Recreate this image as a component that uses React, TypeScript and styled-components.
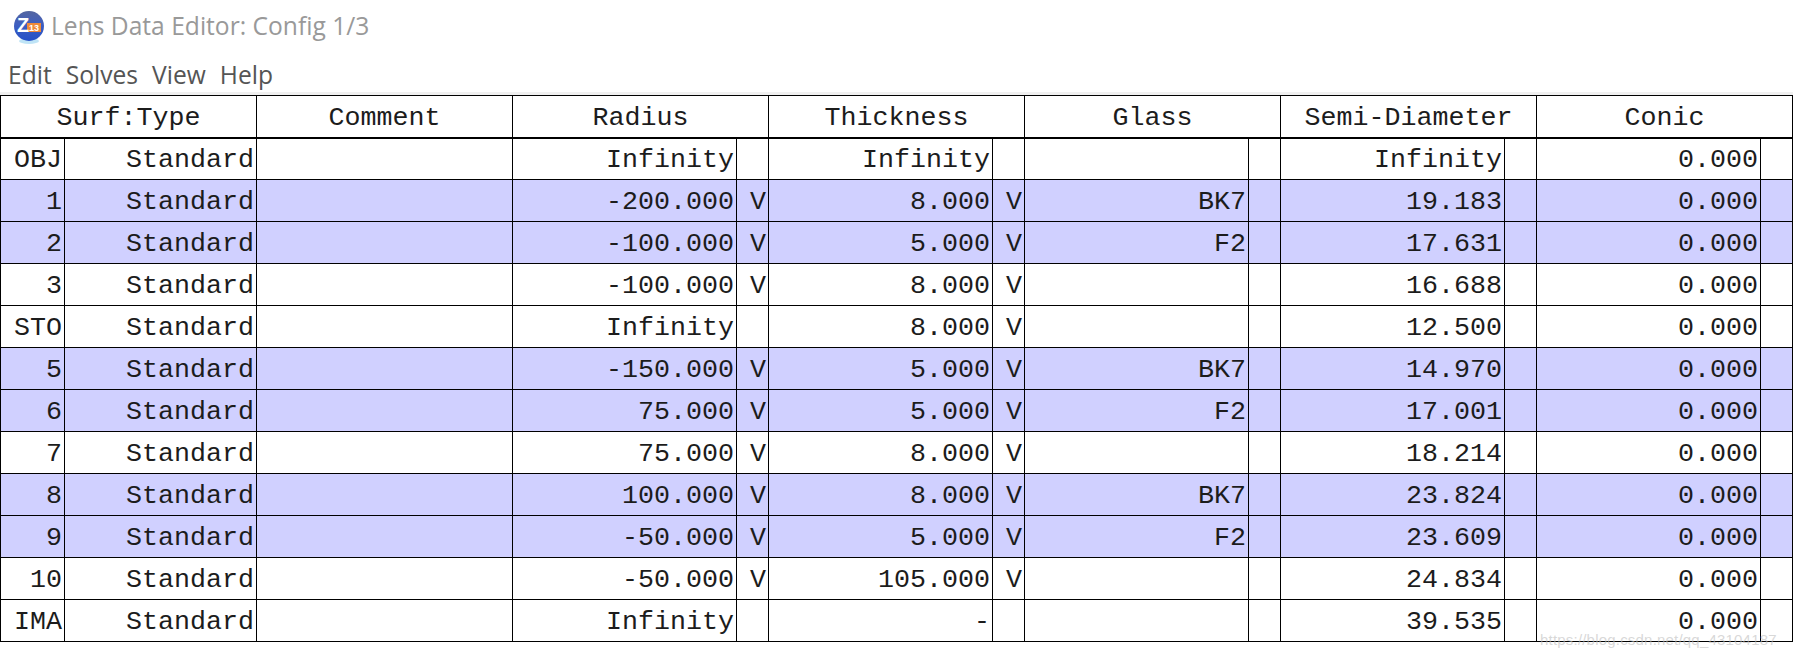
import React from 'react';
import styled, { createGlobalStyle } from 'styled-components';

const GlobalStyle = createGlobalStyle`
  html, body {
    margin: 0;
    padding: 0;
    background: #ffffff;
  }
`;

interface Surface {
  id: string;
  radius: string;
  radiusSolve?: boolean;
  thickness: string;
  thicknessSolve?: boolean;
  glass?: string;
  semi: string;
  shaded?: boolean;
}

const headers = ['Comment', 'Radius', 'Thickness', 'Glass', 'Semi-Diameter', 'Conic'];

const surfaces: Surface[] = [
  { id: 'OBJ', radius: 'Infinity', thickness: 'Infinity', semi: 'Infinity' },
  { id: '1', radius: '-200.000', radiusSolve: true, thickness: '8.000', thicknessSolve: true, glass: 'BK7', semi: '19.183', shaded: true },
  { id: '2', radius: '-100.000', radiusSolve: true, thickness: '5.000', thicknessSolve: true, glass: 'F2', semi: '17.631', shaded: true },
  { id: '3', radius: '-100.000', radiusSolve: true, thickness: '8.000', thicknessSolve: true, semi: '16.688' },
  { id: 'STO', radius: 'Infinity', thickness: '8.000', thicknessSolve: true, semi: '12.500' },
  { id: '5', radius: '-150.000', radiusSolve: true, thickness: '5.000', thicknessSolve: true, glass: 'BK7', semi: '14.970', shaded: true },
  { id: '6', radius: '75.000', radiusSolve: true, thickness: '5.000', thicknessSolve: true, glass: 'F2', semi: '17.001', shaded: true },
  { id: '7', radius: '75.000', radiusSolve: true, thickness: '8.000', thicknessSolve: true, semi: '18.214' },
  { id: '8', radius: '100.000', radiusSolve: true, thickness: '8.000', thicknessSolve: true, glass: 'BK7', semi: '23.824', shaded: true },
  { id: '9', radius: '-50.000', radiusSolve: true, thickness: '5.000', thicknessSolve: true, glass: 'F2', semi: '23.609', shaded: true },
  { id: '10', radius: '-50.000', radiusSolve: true, thickness: '105.000', thicknessSolve: true, semi: '24.834' },
  { id: 'IMA', radius: 'Infinity', thickness: '-', semi: '39.535' },
];

const Page = styled.div`
  position: relative;
  width: 1793px;
  height: 657px;
  overflow: hidden;
  background: #ffffff;
`;

const TitleBar = styled.div`
  display: flex;
  align-items: center;
  gap: 6px;
  height: 48px;
  padding: 3px 0 0 14px;
  box-sizing: border-box;
`;

const LogoMark = styled.svg`
  flex: none;
  margin-top: 4px;
`;

const Title = styled.span`
  font-family: 'Open Sans', 'Noto Sans', sans-serif;
  font-size: 24.6px;
  color: #999999;
`;

const MenuBar = styled.div`
  display: flex;
  gap: 14px;
  height: 47px;
  padding: 11px 0 0 8px;
  box-sizing: border-box;
  border-bottom: 3px solid #f0f0f0;
`;

const MenuItem = styled.span`
  font-family: 'Open Sans', 'Noto Sans', sans-serif;
  font-size: 24.6px;
  line-height: 32px;
  color: #555555;
`;

const Table = styled.div`
  width: 1793px;
  font-family: 'Liberation Mono', 'Courier New', monospace;
  font-size: 26.67px;
  color: #1c1c1c;
`;

const HeaderRow = styled.div`
  display: grid;
  grid-template-columns: repeat(7, 256px) 1px;
  height: 44px;
  box-sizing: border-box;
  border-top: 1px solid #000000;
  border-bottom: 2px solid #000000;
`;

const HeaderCell = styled.div`
  display: flex;
  align-items: center;
  justify-content: center;
  box-sizing: border-box;
  border-left: 1px solid #000000;
  padding-top: 2px;
`;

const Row = styled.div<{ $shaded?: boolean }>`
  display: grid;
  grid-template-columns: repeat(7, 256px) 1px;
  height: 42px;
  box-sizing: border-box;
  border-bottom: 1px solid #000000;
  background: ${(p) => (p.$shaded ? '#d0d0ff' : '#ffffff')};

  ${HeaderRow} + & {
    height: 41px;
  }
`;

const Split = styled.div<{ $side: number }>`
  display: grid;
  grid-template-columns: ${(p) => (p.$side === 64 ? '64px 192px' : '224px 32px')};
  box-sizing: border-box;
  min-width: 0;
`;

const Cell = styled.div`
  display: flex;
  align-items: center;
  justify-content: flex-end;
  box-sizing: border-box;
  border-left: 1px solid #000000;
  padding: 2px 2px 0 0;
  white-space: pre;
  line-height: 38px;
`;

const Watermark = styled.div`
  position: absolute;
  left: 1540px;
  top: 632px;
  font-family: 'Liberation Sans', Arial, sans-serif;
  font-size: 15px;
  line-height: 15px;
  letter-spacing: 0.2px;
  color: rgba(190, 190, 190, 0.6);
  white-space: nowrap;
`;

const ZemaxLogo = () => (
  <LogoMark width="31" height="35" viewBox="0 0 31 35" aria-hidden="true">
    <defs>
      <linearGradient id="ball" x1="0" y1="0" x2="0" y2="1">
        <stop offset="0%" stopColor="#54659f" />
        <stop offset="45%" stopColor="#3f5fc0" />
        <stop offset="100%" stopColor="#2450c8" />
      </linearGradient>
    </defs>
    <ellipse cx="15" cy="31" rx="10" ry="3" fill="#bfe4f6" />
    <circle cx="15" cy="16" r="15" fill="url(#ball)" />
    <rect x="13" y="13" width="14" height="9" fill="#ef8a3a" />
    <text x="3" y="22" fontFamily="'Liberation Sans', sans-serif" fontWeight="700" fontSize="20" fill="#ffffff">Z</text>
    <text x="15" y="21" fontFamily="'Liberation Sans', sans-serif" fontWeight="700" fontSize="9" fill="#ffffff">13</text>
  </LogoMark>
);

const SolveCell = ({ value, solve }: { value: string; solve?: boolean }) => (
  <Split $side={32}>
    <Cell>{value}</Cell>
    <Cell>{solve ? 'V' : ''}</Cell>
  </Split>
);

export default function App() {
  return (
    <Page>
      <GlobalStyle />
      <TitleBar>
        <ZemaxLogo />
        <Title>Lens Data Editor: Config 1/3</Title>
      </TitleBar>
      <MenuBar>
        {['Edit', 'Solves', 'View', 'Help'].map((m) => (
          <MenuItem key={m}>{m}</MenuItem>
        ))}
      </MenuBar>
      <Table>
        <HeaderRow>
          <HeaderCell>Surf:Type</HeaderCell>
          {headers.map((h) => (
            <HeaderCell key={h}>{h}</HeaderCell>
          ))}
          <HeaderCell />
        </HeaderRow>
        {surfaces.map((s) => (
          <Row key={s.id} $shaded={s.shaded}>
            <Split $side={64}>
              <Cell>{s.id}</Cell>
              <Cell>Standard</Cell>
            </Split>
            <Cell />
            <SolveCell value={s.radius} solve={s.radiusSolve} />
            <SolveCell value={s.thickness} solve={s.thicknessSolve} />
            <SolveCell value={s.glass || ''} />
            <SolveCell value={s.semi} />
            <SolveCell value="0.000" />
            <Cell />
          </Row>
        ))}
      </Table>
      <Watermark>https://blog.csdn.net/qq_43104187</Watermark>
    </Page>
  );
}
